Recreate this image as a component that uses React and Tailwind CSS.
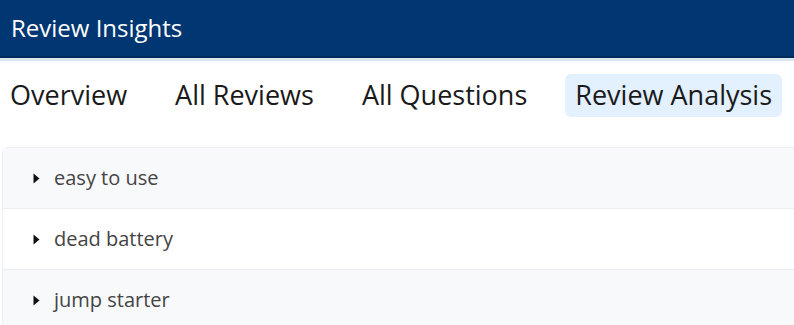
export default function App() {
  const tabs = ["Overview", "All Reviews", "All Questions", "Review Analysis"];
  const rows = ["easy to use", "dead battery", "jump starter"];
  return (
    <div className="w-[794px] h-[325px] overflow-hidden bg-white" style={{ fontFamily: "'Open Sans', 'Noto Sans', sans-serif" }}>
      <div className="h-[58px] bg-[#003671] flex items-center pl-[11px] border-b-2 border-[#002a5c]">
        <span className="text-white text-[24px] leading-none">Review Insights</span>
      </div>
      <div className="h-[3px] bg-[#dde5ee]" />
      <div className="flex items-center gap-[28px] mt-[13px] h-[43px]">
        {tabs.map((t, i) => (
          <div
            key={t}
            className={
              "h-[43px] flex items-center px-[10px] pb-[3px] rounded-md text-[27px] leading-none text-[#1a1a1a] whitespace-nowrap " +
              (i === 3 ? "bg-[#e3f0fd]" : "")
            }
          >
            {t}
          </div>
        ))}
      </div>
      <div className="mt-[30px] ml-[2px] border-l border-t border-[#edeff1] rounded-tl-md">
        {rows.map((r, i) => (
          <div
            key={r}
            className={
              "h-[61px] flex items-center pl-[30px] border-b border-[#eceef0] " +
              (i % 2 === 0 ? "bg-[#f8f9fa]" : "bg-white")
            }
          >
            <svg width="7" height="11" viewBox="0 0 7 11" className="mr-[14px]">
              <path d="M0.5 0.5 L6.5 5.5 L0.5 10.5 Z" fill="#111" />
            </svg>
            <span className="text-[20px] leading-none text-[#444]">{r}</span>
          </div>
        ))}
      </div>
    </div>
  );
}
